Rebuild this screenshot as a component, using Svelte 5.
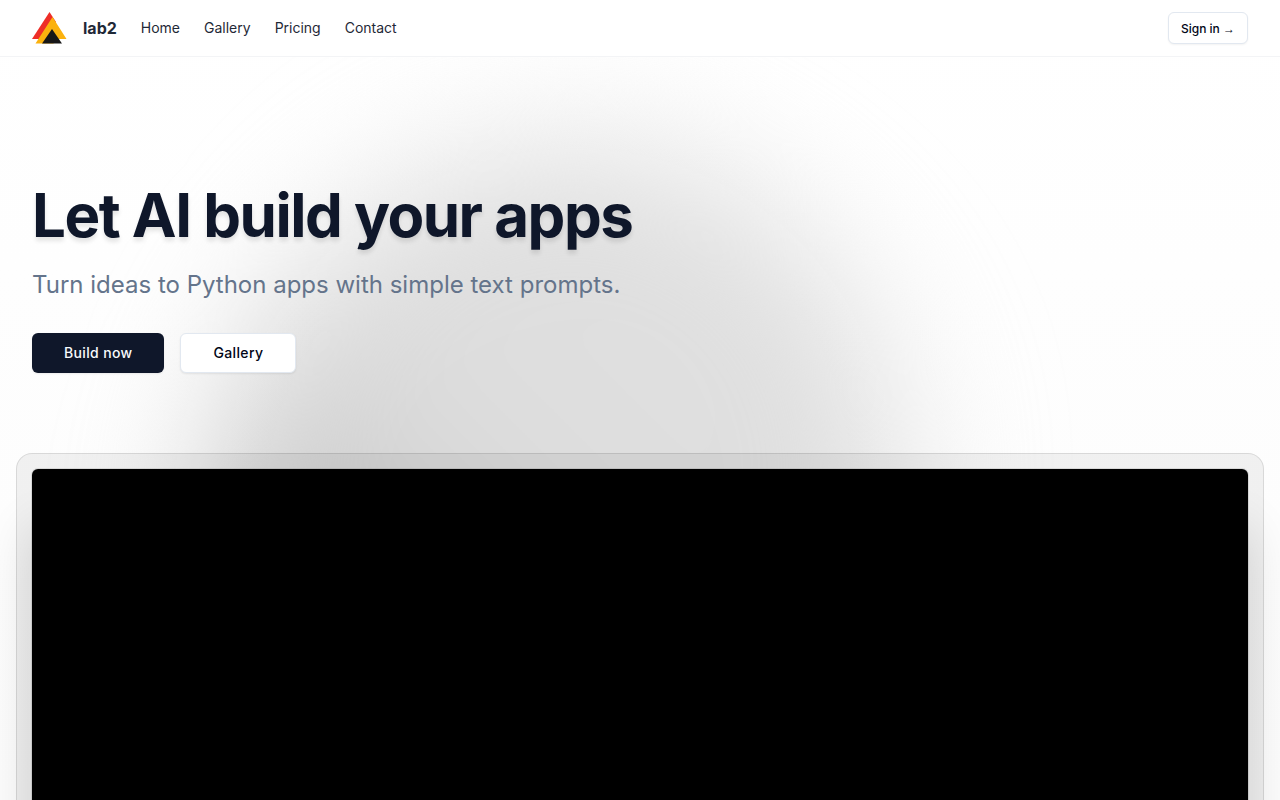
<script>
  const links = ['Home', 'Gallery', 'Pricing', 'Contact'];
</script>

<div class="page">
  <header>
    <a class="brand" href="#home">
      <svg width="36" height="36" viewBox="0 0 36 36" aria-hidden="true">
        <path d="M17.500 2 0 29h12L24 12Z" fill="#ee2e27" />
        <path d="M20.500 7 3.500 33.500h18L24.500 29H34.500Z" fill="#fbb20e" />
        <path d="M20 19 10 33.500h20Z" fill="#171717" />
      </svg>
      <span>lab2</span>
    </a>
    <nav>
      {#each links as label}
        <a href="#{label.toLowerCase()}">{label}</a>
      {/each}
    </nav>
    <button class="sign-in" type="button">Sign in <span>→</span></button>
  </header>

  <main>
    <div class="glow" aria-hidden="true"></div>
    <section class="hero">
      <h1>Let AI build your apps</h1>
      <p>Turn ideas to Python apps with simple text prompts.</p>
      <div class="actions">
        <button class="primary" type="button">Build now</button>
        <button class="secondary" type="button">Gallery</button>
      </div>
    </section>
    <section class="frame">
      <div class="video"></div>
    </section>
  </main>
</div>

<style>
  :global(body) {
    margin: 0;
    background: #fff;
  }

  .page {
    height: 100vh;
    overflow: hidden;
    display: flex;
    flex-direction: column;
    font-family: Inter, sans-serif;
    color: #0f172a;
    background: linear-gradient(#fff, #fcfcfc);
  }

  header {
    display: flex;
    align-items: center;
    height: 56px;
    flex: none;
    padding: 0 32px;
    border-bottom: 1px solid #f3f4f6;
    background: #fff;
  }

  a {
    color: #1f2937;
    text-decoration: none;
  }

  .brand {
    display: flex;
    align-items: center;
    gap: 15px;
    font-size: 16px;
    font-weight: 700;
    line-height: 24px;
  }

  nav {
    display: flex;
    gap: 24px;
    margin-left: 24px;
    font-size: 14px;
    line-height: 20px;
  }

  button {
    font-family: inherit;
    font-weight: 500;
    border-radius: 6px;
    cursor: pointer;
  }

  .sign-in {
    height: 32px;
    margin-left: auto;
    padding: 0 12px;
    font-size: 12px;
    color: #020617;
    background: #fff;
    border: 1px solid #e2e8f0;
    box-shadow: 0 1px 2px rgb(0 0 0 / 5%);
  }

  .sign-in span {
    font-family: "Liberation Sans", sans-serif;
    font-weight: 400;
  }

  main {
    position: relative;
    flex: 1;
    min-height: 0;
    overflow: hidden;
    display: flex;
    flex-direction: column;
    padding: 0 16px;
  }

  .glow {
    position: absolute;
    top: 80px;
    left: 17%;
    width: 53%;
    height: 720px;
    border-radius: 50%;
    background: linear-gradient(15deg, #c2c2c2 15%, #dddddd 48%, #e2e2e2);
    filter: blur(68px);
    transform: rotate(30deg);
  }

  .hero {
    position: relative;
    padding: 128px 16px 80px;
  }

  h1 {
    margin: 0;
    font-size: 60px;
    line-height: 60px;
    font-weight: 700;
    letter-spacing: -0.025em;
    text-shadow: 0 4px 4px rgb(0 0 0 / 10%);
  }

  p {
    margin: 24px 0 32px;
    font-size: 24px;
    line-height: 32px;
    color: #64748b;
  }

  .actions {
    display: flex;
    gap: 16px;
  }

  .actions button {
    height: 40px;
    padding: 0 32px 2px;
    font-size: 14px;
    letter-spacing: 0.025em;
    box-shadow: 0 1px 2px rgb(0 0 0 / 8%);
  }

  .primary {
    color: #f8fafc;
    background: #0f172a;
    border: 0;
  }

  .secondary {
    color: #020617;
    background: #fff;
    border: 1px solid #e2e8f0;
  }

  .frame {
    position: relative;
    flex: 1;
    padding: 15px 15px 0;
    border: 1px solid rgb(0 0 0 / 10%);
    border-bottom: 0;
    border-radius: 16px 16px 0 0;
    background: rgb(0 0 0 / 5%);
    display: flex;
  }

  .video {
    flex: 1;
    border-radius: 6px 6px 0 0;
    background: #000;
    box-shadow: 0 0 0 1px rgb(0 0 0 / 10%), 0 60px 50px rgb(0 0 0 / 14%);
  }
</style>
